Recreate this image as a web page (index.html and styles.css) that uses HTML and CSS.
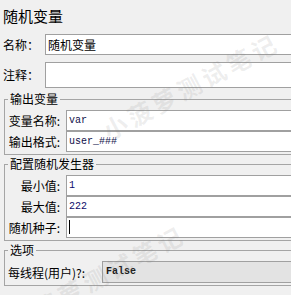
FILE: index.html
```html
<!DOCTYPE html>
<html lang="zh-CN">
<head>
  <meta charset="UTF-8" />
  <meta name="viewport" content="width=device-width, initial-scale=1.0"/>
  <title>随机变量</title>
  <link rel="stylesheet" href="styles.css">
</head>
<body>

  <div class="panel">
    <h1 class="title">随机变量</h1>

    <div class="row">
      <label class="name-label">名称：</label>
      <div class="field">随机变量</div>
    </div>
    <div class="row row-comment">
      <label class="name-label">注释：</label>
      <div class="field field-tall"></div>
    </div>

    <fieldset class="group">
      <legend>输出变量</legend>
      <div class="row">
        <span class="label">变量名称:</span>
        <div class="field mono">var</div>
      </div>
      <div class="row">
        <span class="label">输出格式:</span>
        <div class="field mono">user_###</div>
      </div>
    </fieldset>

    <fieldset class="group">
      <legend>配置随机发生器</legend>
      <div class="row">
        <span class="label">最小值:</span>
        <div class="field mono num">1</div>
      </div>
      <div class="row">
        <span class="label">最大值:</span>
        <div class="field mono num">222</div>
      </div>
      <div class="row">
        <span class="label">随机种子:</span>
        <div class="field"><span class="caret"></span></div>
      </div>
    </fieldset>

    <fieldset class="group">
      <legend>选项</legend>
      <div class="row">
        <span class="label label-left">每线程(用户)?:</span>
        <div class="field field-select mono">False</div>
      </div>
    </fieldset>
  </div>

  <!-- 水印 -->
  <div class="watermark wm-top">小菠萝测试笔记</div>
  <div class="watermark wm-bottom">小菠萝测试笔记</div>

</body>
</html>
```

FILE: styles.css
```css
* {
  margin: 0;
  padding: 0;
  box-sizing: border-box;
}

body {
  font-family: "Noto Sans CJK SC", "Liberation Sans", sans-serif;
  font-size: 12px;
  background-color: #f0f0f0;
  color: #000;
  overflow: hidden;
  width: 291px;
  height: 295px;
  position: relative;
}

.panel {
  padding-top: 7px;
  width: 291px;
  overflow: hidden;
}

.title {
  font-size: 15px;
  font-weight: normal;
  line-height: 18px;
  margin: 0 0 9px 3px;
}

.row {
  display: flex;
  align-items: center;
  margin-right: -20px;
}

.row-comment {
  margin-top: 7px;
  align-items: flex-start;
}

.name-label {
  width: 45px;
  padding-left: 3px;
  line-height: 21px;
}

.row-comment .name-label {
  line-height: 26px;
}

.field {
  flex: 1;
  height: 21px;
  line-height: 19px;
  background-color: #fff;
  border: 1px solid #a0a0a0;
  padding-left: 2px;
  white-space: nowrap;
}

.field-tall {
  height: 26px;
}

.mono {
  font-family: "Liberation Mono", monospace;
  font-size: 10px;
  color: #10104a;
}

.num {
  color: #0a0a6a;
}

.caret {
  display: inline-block;
  width: 1px;
  height: 14px;
  margin-top: 2px;
  background-color: #000;
  vertical-align: top;
}

/* 分组 */
.group {
  border: 1px solid #a5a5a5;
  margin: 1px -20px 0 4px;
  padding: 3px 0 2px 0;
}

.group:first-of-type {
  margin-top: 3px;
}

.group legend {
  margin-left: 3px;
  padding: 0 2px;
  line-height: 16px;
}

.label {
  width: 61px;
  text-align: right;
  padding-right: 6px;
  white-space: nowrap;
}

.label-left {
  width: 97px;
  text-align: left;
  padding-left: 3px;
}

.field-select {
  height: 22px;
  line-height: 20px;
  background-color: #e3e3e3;
  padding-left: 3px;
  font-weight: bold;
  color: #1a1a1a;
}

.watermark {
  position: absolute;
  font-size: 24px;
  font-weight: bold;
  letter-spacing: 4px;
  color: rgba(120, 120, 120, 0.13);
  white-space: nowrap;
  transform: rotate(-28deg);
  transform-origin: left center;
  pointer-events: none;
}

.wm-top {
  left: 104px;
  top: 114px;
}

.wm-bottom {
  left: 10px;
  top: 306px;
}
```
